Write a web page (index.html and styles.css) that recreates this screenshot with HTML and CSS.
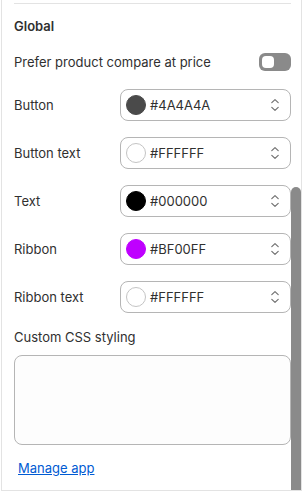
FILE: index.html
```html
<!DOCTYPE html>
<html lang="en">
<head>
<meta charset="utf-8">
<link rel="stylesheet" href="styles.css">
</head>
<body>
<div class="panel">
  <div class="content">
    <div class="divider"></div>
    <h2 class="heading">Global</h2>
    <div class="toggle-row">
      <span class="label">Prefer product compare at price</span>
      <span class="toggle"><span class="knob"></span></span>
    </div>
    <div class="fields">
      <div class="field">
        <span class="label">Button</span>
        <div class="select"><span class="swatch" style="background:#4A4A4A;border-color:#4A4A4A"></span><span class="value">#4A4A4A</span><svg class="chev" viewBox="0 0 20 20"><path d="M6.8 7.6 10 4.6l3.2 3"/><path d="M6.8 12.4 10 15.4l3.2-3"/></svg></div>
      </div>
      <div class="field">
        <span class="label">Button text</span>
        <div class="select"><span class="swatch" style="background:#FFFFFF"></span><span class="value">#FFFFFF</span><svg class="chev" viewBox="0 0 20 20"><path d="M6.8 7.6 10 4.6l3.2 3"/><path d="M6.8 12.4 10 15.4l3.2-3"/></svg></div>
      </div>
      <div class="field">
        <span class="label">Text</span>
        <div class="select"><span class="swatch" style="background:#000000;border-color:#000000"></span><span class="value">#000000</span><svg class="chev" viewBox="0 0 20 20"><path d="M6.8 7.6 10 4.6l3.2 3"/><path d="M6.8 12.4 10 15.4l3.2-3"/></svg></div>
      </div>
      <div class="field">
        <span class="label">Ribbon</span>
        <div class="select"><span class="swatch" style="background:#BF00FF;border-color:#BF00FF"></span><span class="value">#BF00FF</span><svg class="chev" viewBox="0 0 20 20"><path d="M6.8 7.6 10 4.6l3.2 3"/><path d="M6.8 12.4 10 15.4l3.2-3"/></svg></div>
      </div>
      <div class="field">
        <span class="label">Ribbon text</span>
        <div class="select"><span class="swatch" style="background:#FFFFFF"></span><span class="value">#FFFFFF</span><svg class="chev" viewBox="0 0 20 20"><path d="M6.8 7.6 10 4.6l3.2 3"/><path d="M6.8 12.4 10 15.4l3.2-3"/></svg></div>
      </div>
    </div>
    <div class="css-block">
      <span class="label">Custom CSS styling</span>
      <div class="textarea"></div>
    </div>
    <a class="link" href="#">Manage app</a>
  </div>
  <div class="scrollbar"></div>
</div>
</body>
</html>
```

FILE: styles.css
```css
* { box-sizing: border-box; }
html, body { margin: 0; padding: 0; background: #ffffff; }
body {
  font-family: Inter, "Noto Sans", "Liberation Sans", sans-serif;
  font-size: 13px;
  line-height: 20px;
  color: #303030;
}
.panel {
  position: relative;
  margin-left: 1px;
  width: 301px;
  height: 491px;
  border-left: 1px solid #e3e3e3;
  border-right: 1px solid #e3e3e3;
  border-bottom: 1px solid #e3e3e3;
  overflow: hidden;
}
.content {
  padding: 3px 10px 0 12px;
  display: flex;
  flex-direction: column;
}
.divider {
  height: 1px;
  background: #e3e3e3;
}
.heading {
  margin: 12px 0 0 0;
  font-size: 13px;
  font-weight: 600;
  line-height: 20px;
  color: #303030;
}
.toggle-row {
  margin-top: 16px;
  height: 20px;
  display: flex;
  align-items: center;
  justify-content: space-between;
}
.toggle {
  width: 32px;
  height: 18px;
  border-radius: 6px;
  background: #8a8a8a;
  display: flex;
  align-items: center;
  padding-left: 3px;
}
.knob {
  width: 12px;
  height: 12px;
  border-radius: 4px;
  background: #ffffff;
}
.fields {
  margin-top: 17px;
  display: flex;
  flex-direction: column;
  gap: 16px;
}
.field {
  display: grid;
  grid-template-columns: 106px 1fr;
  align-items: center;
  height: 32px;
}
.select {
  height: 32px;
  border: 1px solid #b5b5b5;
  border-radius: 8px;
  display: flex;
  align-items: center;
  padding: 0 5px 0 5px;
  background: #ffffff;
}
.swatch {
  width: 20px;
  height: 20px;
  border-radius: 50%;
  border: 1px solid #c4c4c4;
  flex: none;
}
.value {
  margin-left: 4px;
  flex: 1;
  color: #303030;
}
.chev {
  width: 20px;
  height: 20px;
  fill: none;
  stroke: #707070;
  stroke-width: 1.2;
  stroke-linecap: round;
  stroke-linejoin: round;
  flex: none;
}
.css-block {
  margin-top: 14px;
  display: flex;
  flex-direction: column;
  gap: 8px;
}
.textarea {
  height: 90px;
  border: 1px solid #b5b5b5;
  border-radius: 8px;
  background: #fdfdfd;
}
.link {
  margin-top: 13px;
  padding-left: 4px;
  color: #005bd3;
  text-decoration: underline;
  align-self: flex-start;
}
.scrollbar {
  position: absolute;
  right: 0;
  top: 187px;
  bottom: 0;
  width: 10px;
  background: #8a8a8a;
  border-radius: 5px 5px 0 0;
}
```
